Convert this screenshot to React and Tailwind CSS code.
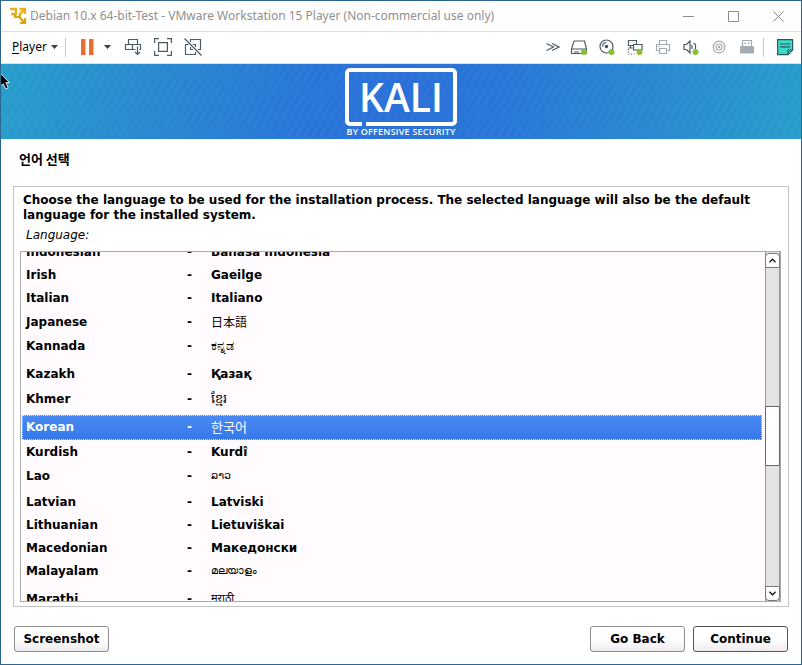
import { useState } from 'react';

const LANGUAGES = [
  { name: 'Indonesian', native: 'Bahasa Indonesia', height: 'h-[23px]' },
  { name: 'Irish', native: 'Gaeilge', height: 'h-[23px]' },
  { name: 'Italian', native: 'Italiano', height: 'h-[24px]' },
  { name: 'Japanese', native: '日本語', height: 'h-[24px]', script: 'japanese' },
  { name: 'Kannada', native: 'ಕನ್ನಡ', height: 'h-[28px]', script: 'wide' },
  { name: 'Kazakh', native: 'Қазақ', height: 'h-[25px]' },
  { name: 'Khmer', native: 'ខ្មែរ', height: 'h-[28px]', script: 'wide' },
  { name: 'Korean', native: '한국어', height: 'h-[25px]', script: 'korean' },
  { name: 'Kurdish', native: 'Kurdî', height: 'h-[24px]' },
  { name: 'Lao', native: 'ລາວ', height: 'h-[26px]', script: 'other' },
  { name: 'Latvian', native: 'Latviski', height: 'h-[23px]' },
  { name: 'Lithuanian', native: 'Lietuviškai', height: 'h-[23px]' },
  { name: 'Macedonian', native: 'Македонски', height: 'h-[23px]' },
  { name: 'Malayalam', native: 'മലയാളം', height: 'h-[28px]', script: 'other' },
  { name: 'Marathi', native: 'मराठी', height: 'h-[28px]', script: 'other' },
];

const SCRIPT_CLASSES = {
  japanese: "font-normal text-[12px] font-['Noto_Sans_CJK_JP',sans-serif]",
  korean: "font-normal text-[13px] font-['Noto_Sans_CJK_KR',sans-serif]",
  wide: "font-normal text-[13px] font-['DejaVu_Sans','Noto_Sans',sans-serif]",
  other: "font-normal text-[11px] font-['DejaVu_Sans','Noto_Sans',sans-serif]",
};

function Icon({ children, className = 'h-[18px] w-[18px]', box = '0 0 18 18' }) {
  return (
    <svg
      viewBox={box}
      className={`${className} shrink-0`}
      fill="none"
      stroke="#4a5a66"
      strokeWidth="1.2"
      aria-hidden="true"
    >
      {children}
    </svg>
  );
}

function Caret() {
  return (
    <Icon className="h-1 w-[7px]" box="0 0 7 4">
      <path d="M0 0h7L3.5 4z" fill="#33404a" stroke="none" />
    </Icon>
  );
}

function ToolButton({ label, className = '', children }) {
  return (
    <button type="button" aria-label={label} className={`flex shrink-0 items-center ${className}`}>
      {children}
    </button>
  );
}

function TitleBar() {
  return (
    <header className="flex h-[30px] shrink-0 items-center bg-white pl-2 pr-[17px]">
      <svg viewBox="0 0 18 18" className="h-[18px] w-[18px] shrink-0" fill="none" aria-hidden="true">
        <path d="M1 2h6v5H2M10.500 2H16v5M15.500 2.500l-5 5" stroke="#e8b21c" strokeWidth="2.400" />
        <path d="M16 11v5h-5M15.500 15.500l-5-5M6 7v3h5V7" stroke="#d9a514" strokeWidth="2.200" />
      </svg>
      <h1 className="ml-[3px] flex-1 truncate text-[12px] text-[#8f8f8f] font-['Noto_Sans','Noto_Sans_CJK_KR',sans-serif]">
        Debian 10.x 64-bit-Test - VMware Workstation 15 Player (Non-commercial use only)
      </h1>
      <div className="flex items-center gap-[34px]">
        <ToolButton label="Minimize">
          <Icon className="h-[11px] w-[11px]" box="0 0 11 11">
            <path d="M0 5.500h11" stroke="#8a8a8a" strokeWidth="1" />
          </Icon>
        </ToolButton>
        <ToolButton label="Maximize">
          <Icon className="h-[11px] w-[11px]" box="0 0 11 11">
            <path d="M.5.500h10v10H.5z" stroke="#8a8a8a" strokeWidth="1" />
          </Icon>
        </ToolButton>
        <ToolButton label="Close">
          <Icon className="h-[11px] w-[11px]" box="0 0 11 11">
            <path d="M.5.500l10 10M10.500.500l-10 10" stroke="#8a8a8a" strokeWidth="1" />
          </Icon>
        </ToolButton>
      </div>
    </header>
  );
}

function Toolbar() {
  return (
    <div className="flex h-[33px] shrink-0 items-center border-y border-[#dadfe8] bg-white pr-[7px] pb-px pl-[11px]">
      <button type="button" className="flex items-center gap-1 text-[12px] text-black font-['Noto_Sans',sans-serif]">
        <span>
          <span className="underline underline-offset-2">P</span>layer
        </span>
        <Caret />
      </button>
      <div className="ml-[7px] h-[19px] w-px bg-[#c8c8c8]" />
      <ToolButton label="Pause" className="ml-[15px]">
        <Icon className="h-4 w-[13px]" box="0 0 13 16">
          <path d="M0 0h4.500v16H0zM8 0h4.500v16H8z" fill="#e96f2e" stroke="none" />
        </Icon>
      </ToolButton>
      <ToolButton label="Power options" className="ml-2.5">
        <Caret />
      </ToolButton>
      <div className="ml-[13px] flex items-center gap-3">
        <ToolButton label="Send Ctrl+Alt+Del">
          <Icon>
            <path d="M4.500 1.500h9v5h-9zM1.500 6.500h7v5h-7zM8.500 6.500h8v5h-1M8.500 11.500h3" />
            <path d="M13.500 8.500v8M11 14l2.500 2.500L16 14" />
          </Icon>
        </ToolButton>
        <ToolButton label="Full screen">
          <Icon>
            <path d="M.6 5V.6H5M13 .6h4.400V5M17.400 13v4.400H13M5 17.400H.6V13M4.600 4.600h8.800v8.800H4.600z" />
          </Icon>
        </ToolButton>
        <ToolButton label="Unity">
          <Icon>
            <path d="M6.500 4V1.500h10v10h-2.500M4.500 6.500H1.500v10h10V14M9 6.500h2.500V9M6.500 9v2.500H9" />
            <path d="M.5.500l17 17" />
          </Icon>
        </ToolButton>
      </div>
      <div className="ml-auto flex items-center gap-2.5">
        <ToolButton label="Collapse">
          <Icon className="h-2.5 w-[14px]" box="0 0 14 10">
            <path d="M.5 1.500L7.500 5l-7 3.500M6 1.500L13 5l-7 3.500" />
          </Icon>
        </ToolButton>
        <ToolButton label="Hard disk">
          <Icon>
            <path d="M4 3h10.500l2 8v4.500H1.500V11zM1.500 11h15M4 14h5" />
            <circle cx="14" cy="14" r="3" fill="#86c232" stroke="none" />
          </Icon>
        </ToolButton>
        <ToolButton label="CD/DVD">
          <Icon>
            <circle cx="8.500" cy="8.500" r="6.500" />
            <path d="M4.500 8.500a4 4 0 0 1 4-4" />
            <circle cx="8.500" cy="8.500" r="1.200" fill="#4a5a66" />
            <circle cx="13.500" cy="14" r="3" fill="#86c232" stroke="none" />
          </Icon>
        </ToolButton>
        <ToolButton label="Network adapter">
          <Icon>
            <path d="M7.500 7.500H2.500v-5h8V6M7.500 6.500h8.500v5.500H7.500zM4.500 7.500v2.500M2.500 10h4" />
            <path d="M2.500 11v5H10" strokeDasharray="1 1.500" />
            <circle cx="13.500" cy="14" r="3" fill="#86c232" stroke="none" />
          </Icon>
        </ToolButton>
        <ToolButton label="Printer">
          <Icon>
            <path d="M5.500 6.500v-4h7v4M5.500 12.500h-3v-6h13v6h-3M5.500 10.500h7v5h-7zM4 8.500h1.500" stroke="#a3acb3" />
          </Icon>
        </ToolButton>
        <ToolButton label="Sound">
          <Icon>
            <path d="M2 6.500h2.500L8 3v12l-3.500-3.500H2zM10 7v4M11.500 5.500c2.500-.5 2.500 4 1.500 6" />
            <circle cx="13.500" cy="14" r="3" fill="#86c232" stroke="none" />
          </Icon>
        </ToolButton>
        <ToolButton label="Camera">
          <Icon>
            <circle cx="9" cy="9" r="5.800" stroke="#a3acb3" />
            <circle cx="9" cy="9" r="3" stroke="#a3acb3" />
            <circle cx="9" cy="9" r="1.200" fill="#a3acb3" stroke="none" />
          </Icon>
        </ToolButton>
        <ToolButton label="USB device">
          <Icon>
            <path d="M4.500 8V2.500h9V8" stroke="#a3acb3" />
            <path d="M3 8h12l1 1v6.500H2V9zM6.500 4.500h1.500V6H6.500zM10 4.500h1.500V6H10z" fill="#a3acb3" stroke="none" />
          </Icon>
        </ToolButton>
      </div>
      <div className="ml-[7px] h-[19px] w-px bg-[#c8c8c8]" />
      <ToolButton label="Messages" className="ml-3">
        <Icon>
          <path d="M1.600 1.600h15v10.500l-4.500 4.500H1.600z" fill="#3ddcc4" stroke="#2a5560" />
          <path d="M12 16.500V12h4.500M4 6h10M4 8.800h10" stroke="#2a5560" />
        </Icon>
      </ToolButton>
    </div>
  );
}

function Banner() {
  return (
    <div className="relative flex h-[75px] shrink-0 flex-col items-center bg-[repeating-linear-gradient(120deg,transparent_0_3px,rgba(255,255,255,0.015)_4px_6px,transparent_7px),linear-gradient(100deg,#289ecb_0%,#298dcf_15%,#2977d8_38%,#2b70d8_50%,#2977d8_62%,#298dcf_85%,#289ecb_100%)] pt-1 text-white">
      <div className="grid h-[58px] w-28 place-items-center">
        <svg viewBox="0 0 112 58" className="col-start-1 row-start-1 h-[58px] w-28" fill="none" aria-hidden="true">
          <path d="M17 56H5a3 3 0 0 1-3-3V5a3 3 0 0 1 3-3h102a3 3 0 0 1 3 3v48a3 3 0 0 1-3 3H21" stroke="#fff" strokeWidth="4" />
        </svg>
        <span className="col-start-1 row-start-1 text-[39px] leading-[58px] font-semibold font-['Open_Sans',sans-serif]">
          KALI
        </span>
      </div>
      <span className="text-[9px] leading-[11px] font-semibold tracking-wide font-['Open_Sans',sans-serif]">BY OFFENSIVE SECURITY</span>
      <svg viewBox="0 0 10 18" className="absolute top-2 left-0 h-[18px] w-2.5" aria-hidden="true">
        <path d="M-2 0L8.500 10.500H4.800l2.400 5.500-2.500 1-2.300-5.200L-2 15z" fill="#000" stroke="#fff" strokeWidth=".8" />
      </svg>
    </div>
  );
}

function LanguageList() {
  const [selected, setSelected] = useState('Korean');

  return (
    <div className="mr-[7px] mb-1 ml-1.5 flex min-h-0 flex-1 border border-[#a9aaa9] bg-[#fffbff]">
      <div className="min-w-0 flex-1 overflow-hidden pl-px">
        <table
          aria-labelledby="language-label"
          className="-mt-3 w-full table-fixed border-collapse text-left text-[12px] leading-[22px] font-bold text-black"
        >
          <colgroup>
            <col className="w-[165px]" />
            <col className="w-6" />
            <col />
          </colgroup>
          <tbody>
            {LANGUAGES.map(({ name, native, height, script }) => (
              <tr
                key={name}
                aria-selected={name === selected}
                onClick={() => setSelected(name)}
                className={`${height} align-top ${
                  name === selected
                    ? 'bg-linear-to-b from-[#4a8af4] to-[#3778ea] text-white outline-1 -outline-offset-1 outline-dotted outline-[#c5dafc]'
                    : ''
                }`}
              >
                <td className="p-0 pt-px pl-1">{name}</td>
                <td className="p-0 pt-px">-</td>
                <td className="p-0 pt-px">
                  <span className={`block h-[22px] ${script ? SCRIPT_CLASSES[script] : ''}`}>{native}</span>
                </td>
              </tr>
            ))}
          </tbody>
        </table>
      </div>
      <div className="ml-[3px] flex w-[15px] shrink-0 flex-col border-x border-[#999] bg-[#e3e3e3]">
        <button
          type="button"
          aria-label="Scroll up"
          className="-mx-px mt-px flex h-[15px] items-center justify-center rounded-t-sm border border-[#777] bg-white"
        >
          <Icon className="h-[5px] w-[7px]" box="0 0 8 5">
            <path d="M.5 4.500L4 1l3.500 3.500" stroke="#111" strokeWidth="1.500" />
          </Icon>
        </button>
        <div className="flex min-h-0 flex-1 flex-col">
          <div className="grow-[138]" />
          <div className="-mx-px h-[60px] shrink-0 border border-[#666] bg-white" />
          <div className="grow-[120]" />
        </div>
        <button
          type="button"
          aria-label="Scroll down"
          className="-mx-px flex h-[15px] items-center justify-center rounded-b-sm border border-[#777] bg-white"
        >
          <Icon className="h-[5px] w-[7px]" box="0 0 8 5">
            <path d="M.5.500L4 4 7.500.500" stroke="#111" strokeWidth="1.500" />
          </Icon>
        </button>
      </div>
    </div>
  );
}

function InstallerButton({ children, border = 'border-[#8c8c8c]' }) {
  return (
    <button
      type="button"
      className={`h-[26px] w-[95px] rounded-[3px] border bg-linear-to-b from-white from-50% to-[#eeebee] text-[12px] font-bold text-black ${border}`}
    >
      {children}
    </button>
  );
}

export default function App() {
  return (
    <div className="flex h-screen flex-col border border-[#2f6690] bg-white font-['DejaVu_Sans',sans-serif]">
      <TitleBar />
      <Toolbar />
      <Banner />
      <main className="flex min-h-0 flex-1 flex-col px-3 pb-3">
        <h2 className="mt-3 ml-1.5 text-[13px] leading-4 font-bold text-black font-['Noto_Sans_CJK_KR',sans-serif]">
          언어 선택
        </h2>
        <section className="mt-[19px] flex min-h-0 flex-1 flex-col border border-[#c3c3c3]">
          <p className="mt-1.5 px-[9px] text-[12px] leading-[15px] font-bold text-black">
            Choose the language to be used for the installation process. The selected language will also be the default
            language for the installed system.
          </p>
          <p id="language-label" className="mt-[5px] mb-2 pl-3 text-[12px] leading-[15px] text-black italic">
            Language:
          </p>
          <LanguageList />
        </section>
        <div className="mt-[19px] flex shrink-0 items-center gap-2 px-px">
          <InstallerButton>Screenshot</InstallerButton>
          <div className="flex-1" />
          <InstallerButton>Go Back</InstallerButton>
          <InstallerButton border="border-[#555]">Continue</InstallerButton>
        </div>
      </main>
    </div>
  );
}
